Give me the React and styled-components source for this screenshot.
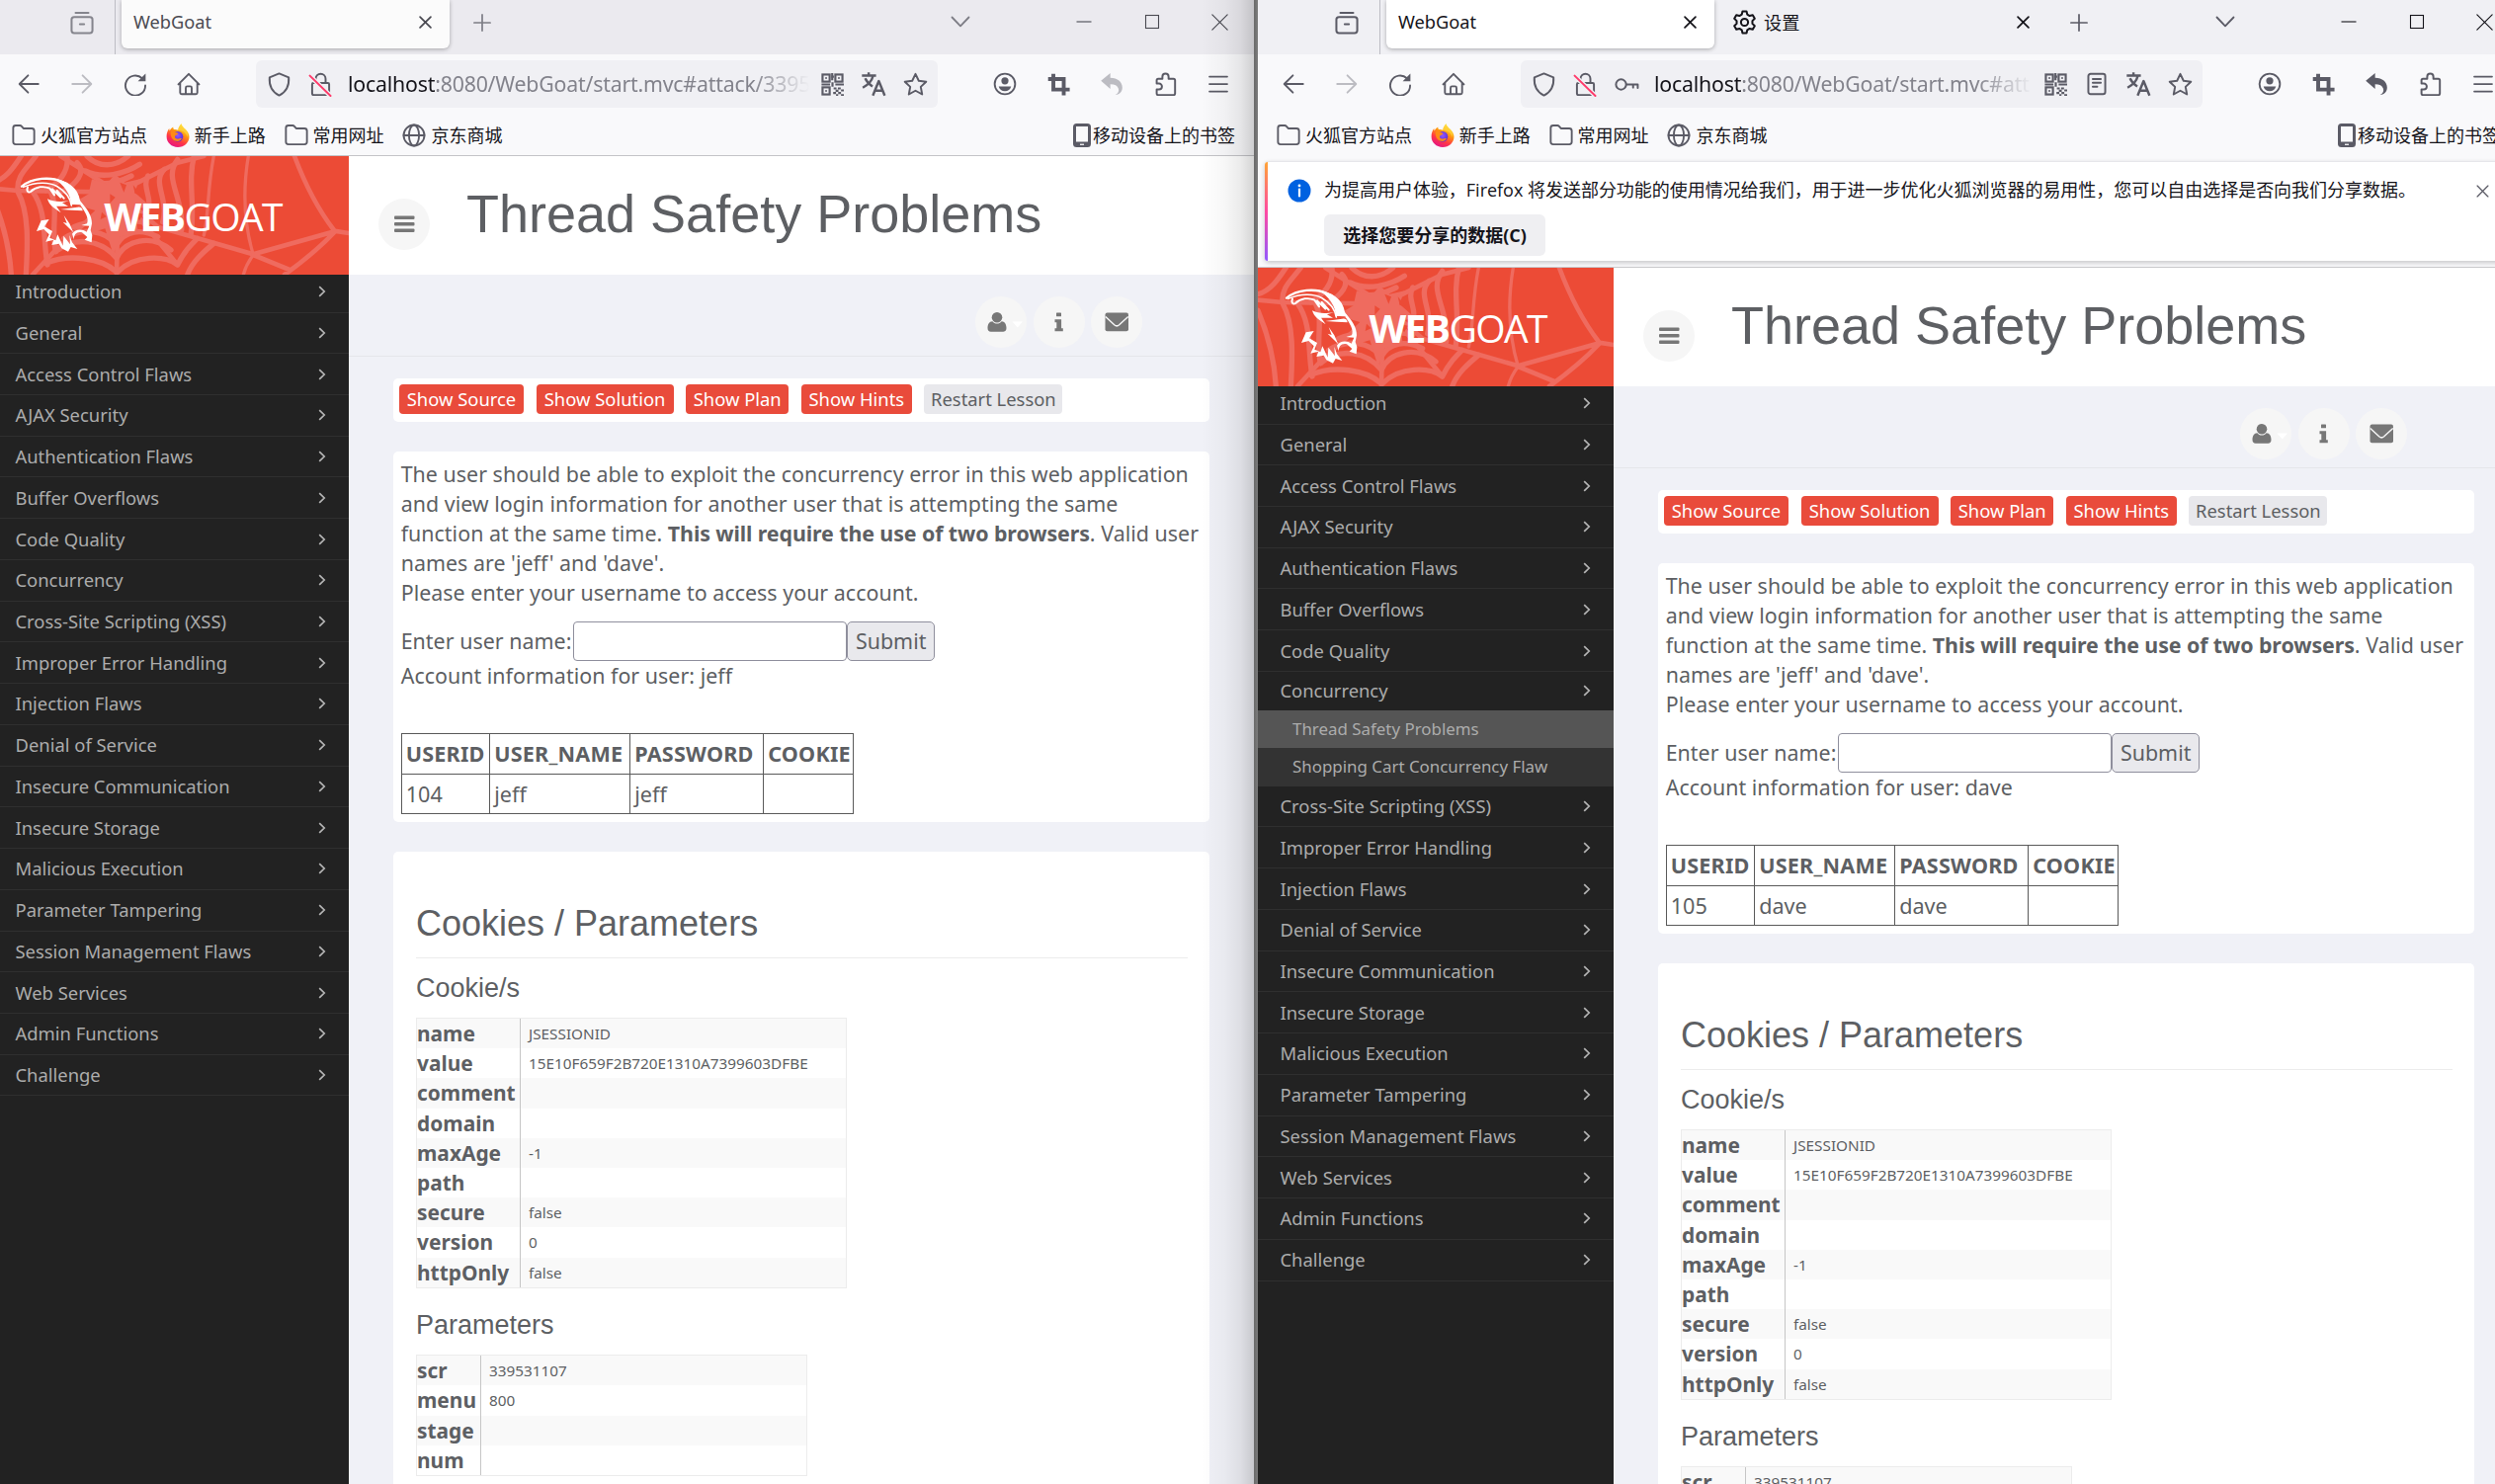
import React from "react";
import styled, { createGlobalStyle, css } from "styled-components";

const UI = `"Noto Sans", "Noto Sans CJK SC", sans-serif`;
const CJK = `"Open Sans", "Noto Sans CJK SC", sans-serif`;
const ARIAL = `"Liberation Sans", Arial, sans-serif`;

const Global = createGlobalStyle`
  * { box-sizing: border-box; }
  body { margin: 0; overflow: hidden; background: #f9f9fb; font-family: ${UI}; }
  svg { display: block; flex: none; }
`;

/* ---------- desktop ---------- */
const Desktop = styled.div`
  display: flex;
  width: 2525px;
  height: 1502px;
  overflow: hidden;
`;
const Pane = styled.div`
  position: relative;
  width: ${(p) => p.$w}px;
  height: 1502px;
  overflow: hidden;
`;
const Edge = styled.div`
  width: 4px;
  background: linear-gradient(90deg, #6a6a6a, #7c7c7c);
`;
const Shade = styled.div`
  position: absolute;
  top: 0;
  right: 0;
  width: 54px;
  height: 100%;
  background: linear-gradient(90deg, rgba(0, 0, 0, 0), rgba(0, 0, 0, 0.03) 45%, rgba(0, 0, 0, 0.08) 75%, rgba(0, 0, 0, 0.17));
`;
const Window = styled.div`
  display: flex;
  flex-direction: column;
  width: 1280px;
  height: 1502px;
  margin-left: ${(p) => p.$shift}px;
  background: #f9f9fb;
`;

/* ---------- tab strip ---------- */
const Strip = styled.div`
  display: flex;
  align-items: flex-start;
  height: 55px;
  flex: none;
  background: ${(p) => (p.$active ? "#f0f0f4" : "#ebeaef")};
  color: ${(p) => (p.$active ? "#15141a" : "#4a4a52")};
`;
const Slot = styled.div`
  display: flex;
  align-items: center;
  justify-content: center;
  flex: none;
  width: ${(p) => p.$w}px;
  height: ${(p) => p.$h || 46}px;
  margin-left: ${(p) => p.$ml || 0}px;
  margin-right: ${(p) => p.$mr || 0}px;
  color: ${(p) => p.$c || "inherit"};
`;
const StripLine = styled.div`
  width: 1px;
  height: 55px;
  background: #bdbdc4;
  margin: 0 6px 0 0;
`;
const Tab = styled.div`
  display: flex;
  align-items: center;
  width: 332px;
  height: 49px;
  margin-right: 4px;
  padding: 0 ${(p) => (p.$icon ? 17 : 18)}px 5px ${(p) => (p.$icon ? 14 : 12)}px;
  border-radius: 0 0 6px 6px;
  font-size: 18.2px;
  ${(p) =>
    p.$selected &&
    css`
      background: ${p.$active ? "#ffffff" : "#fbfbfb"};
      box-shadow: 0 1px 4px rgba(0, 0, 0, 0.3);
    `}
`;
const TabText = styled.span`
  flex: 1;
  margin-left: ${(p) => p.$ml || 0}px;
`;
const Spacer = styled.div`
  flex: 1;
`;

/* ---------- toolbar ---------- */
const Toolbar = styled.div`
  display: flex;
  align-items: center;
  flex: none;
  height: 61px;
  padding: 0 13px 1px 9px;
  color: #5b5b66;
`;
const UrlBar = styled.div`
  display: flex;
  align-items: center;
  width: 690px;
  height: 48px;
  margin-left: 41px;
  padding: 0 2px;
  border-radius: 6px;
  background: #f0f0f4;
`;
const Url = styled.div`
  flex: 1;
  margin-left: 7px;
  overflow: hidden;
  white-space: nowrap;
  font-size: 21.3px;
  letter-spacing: -0.2px;
  line-height: 36px;
  color: #83838c;
  mask-image: linear-gradient(90deg, #000 calc(100% - 60px), transparent calc(100% - 2px));
  b { font-weight: 400; color: #15141a; }
`;

/* ---------- bookmarks ---------- */
const Bookmarks = styled.div`
  display: flex;
  align-items: center;
  flex: none;
  height: ${(p) => (p.$line ? 42 : 41)}px;
  padding: 0 23px 0 19px;
  gap: 18.8px;
  border-bottom: ${(p) => (p.$line ? "1px solid #c4c4c8" : "none")};
  color: #5b5b66;
`;
const Bookmark = styled.div`
  display: flex;
  align-items: center;
  gap: ${(p) => p.$gap ?? 5}px;
  font-family: ${CJK};
  font-size: 18px;
  line-height: 26px;
  white-space: nowrap;
  span { color: #15141a; }
`;

/* ---------- notification ---------- */
const NoticeArea = styled.div`
  flex: none;
  height: 114px;
  padding: 6px 0 0 7px;
  border-bottom: 1px solid #c9c9cc;
`;
const Notice = styled.div`
  display: flex;
  height: 101px;
  border-top: 1px solid #e6e6ea;
  border-radius: 4px 0 0 4px;
  overflow: visible;
  background: #fff;
  box-shadow: 0 2px 5px rgba(0, 0, 0, 0.2);
`;
const NoticeBar = styled.div`
  width: 3px;
  border-radius: 4px 0 0 4px;
  background: linear-gradient(#ffa436, #ff4aa2 50%, #9059ff);
`;
const NoticeIcon = styled.div`
  margin: 17px 0 0 20px;
`;
const NoticeBody = styled.div`
  margin: 15px 0 0 13px;
  font-family: ${CJK};
  font-size: 18px;
  line-height: 26px;
  color: #15141a;
  white-space: nowrap;
`;
const NoticeText = styled.div`
  letter-spacing: -0.02px;
`;
const NoticeButton = styled.div`
  display: flex;
  align-items: center;
  justify-content: center;
  width: 224px;
  height: 42px;
  margin-top: 12px;
  padding-bottom: 1px;
  border-radius: 6px;
  background: #efeff2;
  font-weight: 700;
`;
const NoticeClose = styled.div`
  margin: 23px 0 0 61px;
  color: #5b5b66;
`;

/* ---------- page ---------- */
const Page = styled.div`
  display: flex;
  flex: 1;
  min-height: 0;
  overflow: hidden;
  background: #f0f1f7;
`;
const Sidebar = styled.div`
  width: 360px;
  flex: none;
  background: #222222;
`;
const Brand = styled.div`
  position: relative;
  height: 120px;
  background: #ec4b36;
  overflow: hidden;
`;
const BrandText = styled.div`
  position: absolute;
  left: 112.5px;
  top: 33.5px;
  font-family: "Open Sans", sans-serif;
  font-size: 39px;
  line-height: 54px;
  letter-spacing: -1.6px;
  color: #fff;
  white-space: nowrap;
  font-weight: 400;
  b { font-weight: 700; }
`;
const MenuItem = styled.div`
  display: flex;
  align-items: center;
  justify-content: space-between;
  height: ${(p) => p.$h}px;
  padding: 0 23px ${(p) => (p.$first ? 3 : 0)}px 22.5px;
  border-bottom: ${(p) => (p.$open ? "none" : "1px solid #2f2f2f")};
  font-size: 18.4px;
  line-height: 24px;
  color: #acacac;
  white-space: nowrap;
`;
const SubItem = styled.div`
  height: ${(p) => (p.$current ? 38 : 39)}px;
  padding-left: 35px;
  background: ${(p) => (p.$current ? "#555555" : "#333333")};
  font-size: 16.9px;
  line-height: 38px;
  color: #acacac;
  white-space: nowrap;
`;
const Main = styled.div`
  flex: 1;
  min-width: 0;
`;
const Header = styled.div`
  display: flex;
  height: 120px;
  padding-left: 30px;
  background: #fff;
`;
const Round = styled.div`
  display: flex;
  align-items: center;
  justify-content: center;
  flex: none;
  width: 52px;
  height: 52px;
  margin-top: ${(p) => p.$mt}px;
  border-radius: 50%;
  background: #f6f6f6;
  color: #777777;
`;
const Title = styled.div`
  margin: 28px 0 0 37px;
  font-family: ${ARIAL};
  font-size: 54px;
  line-height: 60px;
  color: #5d5f63;
  white-space: nowrap;
`;
const UserRow = styled.div`
  display: flex;
  justify-content: flex-end;
  gap: 6.7px;
  height: 83px;
  padding-right: 116.6px;
  border-bottom: 1px solid #e5e6ea;
`;
const Content = styled.div`
  display: flex;
  flex-direction: column;
  gap: 30px;
  padding: 22px 49px 0 45px;
  color: #5d5f63;
`;
const Card = styled.div`
  flex: none;
  height: ${(p) => p.$h}px;
  padding: ${(p) => p.$pad};
  border-radius: 5px;
  background: #fff;
`;
const ButtonCard = styled(Card)`
  display: flex;
  gap: 12.6px;
`;
const LessonButton = styled.div`
  width: ${(p) => p.$w}px;
  height: 30px;
  border-radius: 4px;
  text-align: center;
  font-size: 18.4px;
  line-height: 30px;
  white-space: nowrap;
  background: ${(p) => (p.$plain ? "#e8e8ec" : "#e94b3b")};
  color: ${(p) => (p.$plain ? "#5d5f63" : "#fff")};
`;
const Text = styled.div`
  font-size: 21.4px;
  line-height: 30px;
  letter-spacing: 0.03px;
  white-space: nowrap;
  b { letter-spacing: -0.1px; }
`;
const FormRow = styled(Text)`
  display: flex;
  height: 40px;
  margin-top: 14px;
  line-height: 40px;
`;
const Label = styled.div`
  width: 174.5px;
`;
const Field = styled.input`
  width: 277px;
  height: 40px;
  border: 1px solid #8f8f9d;
  border-radius: 4px;
  background: #fff;
`;
const Submit = styled.div`
  width: 89px;
  height: 40px;
  border: 1px solid #8f8f9d;
  border-radius: 5px;
  background: #e9e9ed;
  text-align: center;
  line-height: 38px;
`;
const UserTable = styled.table`
  width: 458px;
  margin-top: 43px;
  border-collapse: collapse;
  table-layout: fixed;
  font-size: 21.6px;
  th, td {
    height: 40.5px;
    padding: 1px 4px 0;
    border: 1px solid #5a5a5a;
    text-align: left;
    line-height: 30px;
    white-space: nowrap;
  }
  th { letter-spacing: 0.2px; }
`;
const H3 = styled.div`
  height: 55px;
  margin-right: 15px;
  border-bottom: 1px solid #ececec;
  font-family: ${ARIAL};
  font-size: 36px;
  line-height: 40px;
`;
const H4 = styled.div`
  margin: ${(p) => p.$mt}px 0 15px;
  font-family: ${ARIAL};
  font-size: 27px;
  line-height: 30px;
`;
const PairTable = styled.div`
  width: ${(p) => p.$w}px;
  border: 1px solid #ececec;
`;
const Pair = styled.div`
  display: flex;
  height: 30.2px;
  background: ${(p) => (p.$odd ? "#f9f9f9" : "#fff")};
`;
const Key = styled.div`
  width: ${(p) => p.$w}px;
  border-right: 1px solid #c6c6c6;
  font-size: 20.9px;
  line-height: 31px;
  font-weight: 700;
  white-space: nowrap;
`;
const Value = styled.div`
  padding-left: 8px;
  font-size: 15.3px;
  line-height: 30px;
`;

/* ---------- icons ---------- */
const Svg = ({ s = 24, box = 16, w = 1.2, children, ...r }) => (
  <svg width={s} height={s} viewBox={`0 0 ${box} ${box}`} fill="none" stroke="currentColor" strokeWidth={w} strokeLinecap="round" strokeLinejoin="round" {...r}>
    {children}
  </svg>
);
const ViewIcon = () => (
  <Svg s={26} w={1.25}><path d="M4 1.8h8" /><rect x="1.5" y="4.4" width="13" height="10" rx="1.6" /><path d="M6.7 8.9h2.6" /></Svg>
);
const CloseIcon = ({ s = 12, w = 1.6 }) => (
  <Svg s={s} box={12} w={w}><path d="M1 1l10 10M11 1L1 11" /></Svg>
);
const PlusIcon = () => <Svg s={18} box={18} w={1.7}><path d="M9 .9v16.2M.9 9h16.2" /></Svg>;
const DownIcon = () => <Svg s={20} box={20} w={1.8}><path d="M1.5 5.5L10 14.3l8.500-8.800" /></Svg>;
const MinIcon = () => <Svg s={16} w={1.1}><path d="M.5 8h15" strokeLinecap="butt" /></Svg>;
const MaxIcon = () => <Svg s={16} w={1.1}><rect x="1.5" y="1.5" width="13" height="13" strokeLinejoin="miter" /></Svg>;
const WinClose = () => <Svg s={17} w={1.1}><path d="M.8.8l14.400 14.400M15.200.8L.8 15.200" /></Svg>;
const BackIcon = () => <Svg w={1.25}><path d="M14.500 8H2M7.600 2.200L1.800 8l5.800 5.800" /></Svg>;
const FwdIcon = () => <Svg w={1.25}><path d="M1.500 8H14M8.400 2.200L14.200 8l-5.800 5.800" /></Svg>;
const ReloadIcon = () => (
  <Svg w={1.25}><path d="M12.600 4.200A6.700 6.700 0 1 0 14.700 9" /><path d="M14.900 1v5.200H9.700z" fill="currentColor" stroke="none" /></Svg>
);
const HomeIcon = () => (
  <Svg w={1.25}><path d="M1 8.300L8 1.200l7 7.100M2.200 7.300v6.500q0 1 1 1h9.600q1 0 1-1V7.300" /><path d="M6 14.600v-4q0-1 1-1h2q1 0 1 1v4" /></Svg>
);
const ShieldIcon = () => (
  <Svg s={25} w={1.25}><path d="M8 .9l6.200 2.500c.4 5.200-1.500 9.300-6.200 11.700C3.300 12.700 1.400 8.600 1.800 3.400z" /></Svg>
);
const LockIcon = () => (
  <Svg s={25} w={1.25}>
    <path d="M4.800 7V4.300a3.200 3.200 0 0 1 6.400 0V7M3.300 7h9.400q.8 0 .8.800v6q0 1-1 1h-9q-1 0-1-1v-6q0-.8.8-.8z" />
    <path d="M1.300 2.600l12.900 12.600" stroke="#f0f0f4" strokeWidth="3" />
    <path d="M1 2.300l13.400 13.100" stroke="#ff3b6b" />
  </Svg>
);
const KeyIcon = () => (
  <Svg s={25} w={1.25}><circle cx="4.200" cy="8" r="3.300" /><path d="M7.600 8h7.400v2.200M12 8v2" /></Svg>
);
const QrIcon = () => (
  <Svg s={23} w={1.500} strokeLinecap="butt" strokeLinejoin="miter">
    <rect x="1" y="1" width="5" height="5" /><rect x="10" y="1" width="5" height="5" /><rect x="1" y="10" width="5" height="5" />
    <path d="M3 3.500h1M12 3.500h1M3 12.500h1M7 2.500h2M7.800 0v5M.3 8h6M8 6.500v3M10 8h6M8.800 10.800h2M11.800 10.800h2M14 12.200h2M10.200 12.400h2M8.500 14h2M12 14h2M14 15.500h2M10.500 15.500h1.500" />
  </Svg>
);
const ReaderIcon = () => (
  <Svg s={24} w={1.300}><rect x="2.300" y="1.200" width="11.400" height="13.600" rx="1.500" /><path d="M5.300 4.600h5.400M5.300 7.200h5.400M5.300 9.800h3" /></Svg>
);
const TranslateIcon = () => (
  <Svg s={26} w={1.500} strokeLinecap="butt"><path d="M.8 2.800h8.800M5 .8v2M7.800 2.800C7 6 4.500 8.700 1.300 10.300M2.800 4.500c1 2.200 2.500 3.800 4.600 5" /><path d="M7.600 15.200l3.700-9 3.700 9M8.900 12.200h4.800" /></Svg>
);
const StarIcon = () => (
  <Svg s={25} w={1.250}><path d="M8 1.200l2.100 4.400 4.800.6-3.500 3.300.9 4.900L8 12l-4.300 2.400.9-4.900L1.100 6.200l4.800-.6z" /></Svg>
);
const AccountIcon = () => (
  <Svg s={24} w={1.250}><circle cx="8" cy="8" r="6.900" /><circle cx="8" cy="5.900" r="2.400" fill="currentColor" stroke="none" /><path d="M3.800 9.700h8.400c-.5 2-2.100 3.200-4.200 3.200S4.300 11.700 3.800 9.700z" fill="currentColor" stroke="none" /></Svg>
);
const CropIcon = () => (
  <Svg s={23} w={2.700} strokeLinecap="butt" strokeLinejoin="miter"><path d="M4.200.6v11h11.500M.5 4.200h11v11.500" /></Svg>
);
const UndoIcon = () => (
  <Svg s={24}><path d="M.8 5.900L7.100.6v3.200c5 .1 8.100 2.700 8.100 6.600 0 2.700-1.500 4.600-4.700 5 2-1.200 2.600-2.700 2.100-4.300-.6-2-2.500-2.900-5.500-2.900v3.200z" fill="currentColor" stroke="none" /></Svg>
);
const PuzzleIcon = () => (
  <Svg s={25} w={1.250}><path d="M6 4.300V3a2 2 0 0 1 4 0v1.300h3.200q1 0 1 1v8.500q0 1-1 1H3.300q-1 0-1-1v-2.600h1.500a1.900 1.900 0 0 0 0-3.800H2.300V5.300q0-1 1-1z" /></Svg>
);
const MenuIcon = () => <Svg s={20} w={1.400}><path d="M.8 2h14.400M.8 8h14.400M.8 14h14.400" /></Svg>;
const FolderIcon = () => (
  <Svg s={24} w={1.250}><path d="M.9 3q0-1.700 1.700-1.700h2.800q.7 0 1.200.6l1.200 1.400h5.600q1.700 0 1.700 1.700v7.400q0 1.700-1.700 1.700H2.600q-1.700 0-1.700-1.700z" /></Svg>
);
const GlobeIcon = () => (
  <Svg s={24} w={1.250}><circle cx="8" cy="8" r="7" /><ellipse cx="8" cy="8" rx="3.400" ry="7" /><path d="M1 8h14" /></Svg>
);
const PhoneIcon = () => (
  <svg width="18" height="24" viewBox="0 0 18 24"><rect width="18" height="24" rx="3.500" fill="#5b5b66" /><rect x="3" y="3" width="12" height="15.500" fill="#f9f9fb" /><rect x="7" y="20.600" width="4" height="1.300" fill="#f9f9fb" /></svg>
);
const GearIcon = () => (
  <Svg s={25} w={1.300}><circle cx="8" cy="8" r="2.300" /><path d="M6.700 1h2.600l.5 2 1.500.9 2-.6 1.300 2.300-1.500 1.500v1.800l1.500 1.500-1.300 2.300-2-.6-1.500.9-.5 2H6.700l-.5-2-1.500-.9-2 .6-1.300-2.300 1.500-1.500V7.100L1.400 5.600l1.300-2.300 2 .6L6.200 3z" /></Svg>
);
const FoxIcon = ({ id }) => (
  <svg width="24" height="24" viewBox="0 0 24 24">
    <defs>
      <linearGradient id={`${id}a`} x1=".8" y1="0" x2=".3" y2="1"><stop offset=".05" stopColor="#fff44f" /><stop offset=".4" stopColor="#ff980e" /><stop offset=".7" stopColor="#ff3647" /><stop offset="1" stopColor="#e31587" /></linearGradient>
      <radialGradient id={`${id}b`} cx=".5" cy=".4" r=".6"><stop offset="0" stopColor="#9059ff" /><stop offset="1" stopColor="#5b2bd0" /></radialGradient>
    </defs>
    <path d="M15.500.3c.4 2.600 2.400 3.800 4.300 5.700 2.300 2.200 3.700 4.600 3.700 7.500C23.500 19.300 18.400 24 12 24S.6 19.300.6 13.300c0-3.500 1-6 2.600-8.300l.5 2.400C4.600 5.500 6 4.300 7.200 3.500c0 1 .3 1.900.8 2.500 1.500-.2 3 0 4.300.7.300-2.500 1.300-4.600 3.200-6.400z" fill={`url(#${id}a)`} />
    <circle cx="12" cy="13.200" r="5.300" fill={`url(#${id}b)`} />
    <path d="M4.800 8.400c2-1 3.800-.4 5 .9 1 .1 2 .2 2.600.9-.8 1.200-2.200 1.200-3.200 2.300-.7 1.500.3 2.800 2 3.100 2 .3 3.200-1 4.700-.6-1 2.300-3.300 3.300-5.700 2.800C6.600 17 4.200 13 4.800 8.400z" fill="#ff8a16" />
    <path d="M15.500.3c.4 2.600 2.400 3.800 4.300 5.700 1.800 2 2.700 4.500 2 8-.6-2.700-2.300-4.700-4.600-6-2-.9-3.800-1-4.900-1.300.3-2.500 1.300-4.600 3.200-6.400z" fill="#ffd338" opacity=".75" />
  </svg>
);
const InfoIcon = () => (
  <svg width="24" height="24" viewBox="0 0 24 24"><circle cx="12" cy="12" r="11.500" fill="#0061e0" /><circle cx="12" cy="6.900" r="1.400" fill="#fff" /><path d="M12 10.500v7" stroke="#fff" strokeWidth="2.200" strokeLinecap="round" /></svg>
);
const BarsIcon = () => (
  <svg width="21" height="18" viewBox="0 0 21 18" fill="#777"><rect y=".5" width="20.500" height="3.400" rx="1" /><rect y="7" width="20.500" height="3.400" rx="1" /><rect y="13.500" width="20.500" height="3.400" rx="1" /></svg>
);
const UserIcon = () => (
  <svg width="50" height="22" viewBox="0 0 50 22"><circle cx="21" cy="6.200" r="5.300" fill="#777" /><path d="M16.400 10.200c1.100 1.500 2.700 2.400 4.600 2.400s3.500-.9 4.600-2.400c3.300.2 4.900 3 4.900 6.900 0 2.500-1.300 3.700-3.200 3.700H14.700c-1.900 0-3.200-1.200-3.200-3.700 0-3.900 1.600-6.700 4.900-6.900z" fill="#777" /><path d="M36.500 10.500h10.500l-5.200 6z" fill="#fff" /></svg>
);
const InfoGlyph = () => (
  <svg width="10" height="20" viewBox="0 0 10 20" fill="#777"><rect x="2" y=".5" width="5" height="3.800" rx=".6" /><path d="M.5 7.200h6.600v9h1.700v3H.5v-3h1.800v-6H.5z" /></svg>
);
const MailIcon = () => (
  <svg width="25" height="20" viewBox="0 0 25 20"><rect x=".5" y=".5" width="23.500" height="18.800" rx="2" fill="#777" /><path d="M.8 4.500l8.900 8.300c1.600 1.400 3.400 1.400 5 0l9-8.300" fill="none" stroke="#f6f6f6" strokeWidth="1.500" /></svg>
);
const Angle = () => (
  <svg width="8" height="12" viewBox="0 0 8 12" fill="none" stroke="#b4b4b4" strokeWidth="1.700"><path d="M1.200 1.200L6.200 6l-5 4.800" /></svg>
);

const BrandArt = () => (
  <svg width="360" height="120" viewBox="0 0 1080 360">
    <g fill="none" stroke="#ef6b5f" strokeWidth="16" strokeLinecap="round">
      <path d="M380 110L75 105L0 98M380 110L205 0M380 110L560 20L640 0M380 110L190 285L120 360M380 110L375 360M380 110L500 215L630 252L790 298L1040 228L1080 234M380 110L560 330M915 0C945 80 985 160 1035 225M790 300L900 345M1035 232C990 280 940 320 885 360" strokeWidth="14" />
      <path d="M670 0C650 100 655 180 640 240M775 0C760 90 760 200 790 300M790 300C775 320 765 340 760 360" strokeWidth="10" />
      <path d="M0 80C40 70 65 30 85 0M75 108C70 60 100 40 130 0M75 108C110 170 105 270 100 360M0 130C30 200 50 280 55 360M120 108C165 170 150 250 165 330M175 108C200 160 175 220 190 290" />
      <path d="M225 0C230 50 200 80 160 104M255 20C285 50 250 85 215 105M285 0C320 35 370 35 410 0M280 45C330 70 400 55 445 25M320 80C350 90 390 75 420 60" />
      <path d="M560 10C515 70 580 120 572 225M610 0C590 80 615 150 600 240M520 40C480 80 535 130 515 200M470 60C450 100 490 130 465 170" />
      <path d="M190 290C250 240 330 255 375 310C400 255 480 235 540 285M215 250C270 215 340 225 375 270C400 225 450 220 500 245M160 325C230 295 330 310 372 350M380 350C430 300 520 300 560 330M245 215C290 195 340 195 375 230C400 200 430 190 470 205M560 330C580 290 600 270 620 250M590 360C605 320 640 290 670 265" />
    </g>
    <path d="M300 70L345 85L370 55L400 80L445 70L430 110L475 150L430 165L440 230L385 245L365 300L340 220L290 235L310 165L240 145L290 115z" fill="#ef6b5f" />
    <path d="M385 80l20 8-8 22zM425 88l24 28-18-2zM355 115l16 10-16 18zM330 170l14 14-18 8zM430 170l26 6-12 20z" fill="#ec4b36" />
    <g fill="none" stroke="#fff" strokeLinecap="round" strokeLinejoin="round">
      <path d="M87 92C120 65 175 62 210 78C240 92 250 115 258 138" strokeWidth="7" />
      <path d="M92 94C130 78 170 78 195 92C225 110 235 128 238 150" strokeWidth="5" />
      <path d="M105 94C100 108 108 112 114 108C130 92 155 90 172 98L186 118L180 100L205 125L194 105L215 128" strokeWidth="6" />
    </g>
    <path d="M180 68C225 72 258 95 264 134L274 152C262 142 244 150 236 146C238 120 215 82 180 68z" fill="#fff" />
    <path d="M165 130C185 140 205 140 232 135L210 142L228 152L192 152L206 172C188 160 170 150 165 130zM205 162L250 156C262 152 272 154 272 166L240 164zM266 138C285 160 300 180 300 205L296 225L301 240L299 262L278 254L286 246L270 232C255 228 244 238 246 254L240 236C250 222 268 220 284 230L292 212L268 210L285 205C292 190 280 170 266 150z" fill="#fff" />
    <path d="M170 192L146 196L132 228L154 222L170 238L160 260L184 254L178 270L200 266L208 280L228 290L236 276L256 282L240 262L232 240L234 268L214 242L212 272L196 238L190 256L172 248L180 228L156 214zM215 180L224 204L212 200L244 232L232 205z" fill="#fff" />
  </svg>
);

/* ---------- data ---------- */
const MENU = [
  "Introduction", "General", "Access Control Flaws", "AJAX Security", "Authentication Flaws",
  "Buffer Overflows", "Code Quality", "Concurrency", "Cross-Site Scripting (XSS)",
  "Improper Error Handling", "Injection Flaws", "Denial of Service", "Insecure Communication",
  "Insecure Storage", "Malicious Execution", "Parameter Tampering", "Session Management Flaws",
  "Web Services", "Admin Functions", "Challenge",
];
const COOKIE = [
  ["name", "JSESSIONID"], ["value", "15E10F659F2B720E1310A7399603DFBE"], ["comment", ""], ["domain", ""],
  ["maxAge", "-1"], ["path", ""], ["secure", "false"], ["version", "0"], ["httpOnly", "false"],
];
const PARAMS = [["scr", "339531107"], ["menu", "800"], ["stage", ""], ["num", ""]];

const Pairs = ({ rows, w, kw }) => (
  <PairTable $w={w}>
    {rows.map(([k, v], i) => (
      <Pair key={k} $odd={i % 2 === 0}><Key $w={kw}>{k}</Key><Value>{v}</Value></Pair>
    ))}
  </PairTable>
);

const Chrome = ({ active, path }) => (
  <>
    <Strip $active={active}>
      <Slot $w={48} $ml={66} $mr={9} $c={active ? "#5b5b66" : "#85858d"}><ViewIcon /></Slot>
      <StripLine />
      <Tab $selected $active={active}><TabText>WebGoat</TabText><CloseIcon s={13} /></Tab>
      {active && (
        <Tab $icon><GearIcon /><TabText $ml={7}>设置</TabText><CloseIcon s={13} /></Tab>
      )}
      <Slot $w={57} $c={active ? "#5b5b66" : "#7d7d85"}><PlusIcon /></Slot>
      <Spacer />
      <Slot $w={57} $mr={62} $h={44} $c={active ? "#5b5b66" : "#7d7d85"}><DownIcon /></Slot>
      <Slot $w={69} $h={44}><MinIcon /></Slot>
      <Slot $w={69} $h={44}><MaxIcon /></Slot>
      <Slot $w={69} $h={44} $mr={4}><WinClose /></Slot>
    </Strip>
    <Toolbar>
      <Slot $w={54}><BackIcon /></Slot>
      <Slot $w={54} $c="#bcbcc2"><FwdIcon /></Slot>
      <Slot $w={54}><ReloadIcon /></Slot>
      <Slot $w={54}><HomeIcon /></Slot>
      <UrlBar>
        <Slot $w={42}><ShieldIcon /></Slot>
        <Slot $w={42}><LockIcon /></Slot>
        {active && <Slot $w={42}><KeyIcon /></Slot>}
        <Url><b>localhost</b>{path}</Url>
        <Slot $w={42}><QrIcon /></Slot>
        {active && <Slot $w={42}><ReaderIcon /></Slot>}
        <Slot $w={42}><TranslateIcon /></Slot>
        <Slot $w={42}><StarIcon /></Slot>
      </UrlBar>
      <Spacer />
      <Slot $w={54}><AccountIcon /></Slot>
      <Slot $w={54}><CropIcon /></Slot>
      <Slot $w={54} $c={active ? "#5b5b66" : "#bcbcc2"}><UndoIcon /></Slot>
      <Slot $w={54}><PuzzleIcon /></Slot>
      <Slot $w={54}><MenuIcon /></Slot>
    </Toolbar>
    <Bookmarks $line={!active}>
      <Bookmark><FolderIcon /><span>火狐官方站点</span></Bookmark>
      <Bookmark><FoxIcon id={active ? "r" : "l"} /><span>新手上路</span></Bookmark>
      <Bookmark><FolderIcon /><span>常用网址</span></Bookmark>
      <Bookmark><GlobeIcon /><span>京东商城</span></Bookmark>
      <Spacer />
      <Bookmark $gap={2}><PhoneIcon /><span>移动设备上的书签</span></Bookmark>
    </Bookmarks>
    {active && (
      <NoticeArea>
        <Notice>
          <NoticeBar />
          <NoticeIcon><InfoIcon /></NoticeIcon>
          <NoticeBody>
            <NoticeText>为提高用户体验，Firefox 将发送部分功能的使用情况给我们，用于进一步优化火狐浏览器的易用性，您可以自由选择是否向我们分享数据。</NoticeText>
            <NoticeButton>选择您要分享的数据(C)</NoticeButton>
          </NoticeBody>
          <NoticeClose><CloseIcon s={13} w={1.2} /></NoticeClose>
        </Notice>
      </NoticeArea>
    )}
  </>
);

const WebGoat = ({ id, user, open }) => (
  <Page>
    <Sidebar>
      <Brand><BrandArt /><BrandText><b>WEB</b>GOAT</BrandText></Brand>
      {MENU.map((m, i) => {
        const opened = open && m === "Concurrency";
        return (
          <React.Fragment key={m}>
            <MenuItem $first={i === 0} $open={opened} $h={i === 0 ? 38.5 : opened ? 38.8 : 41.74}>
              {m}<Angle />
            </MenuItem>
            {opened && (
              <>
                <SubItem $current>Thread Safety Problems</SubItem>
                <SubItem>Shopping Cart Concurrency Flaw</SubItem>
              </>
            )}
          </React.Fragment>
        );
      })}
    </Sidebar>
    <Main>
      <Header><Round $mt={43}><BarsIcon /></Round><Title>Thread Safety Problems</Title></Header>
      <UserRow>
        <Round $mt={22}><UserIcon /></Round>
        <Round $mt={22}><InfoGlyph /></Round>
        <Round $mt={22}><MailIcon /></Round>
      </UserRow>
      <Content>
        <ButtonCard $h={44} $pad="6px">
          <LessonButton $w={126}>Show Source</LessonButton>
          <LessonButton $w={139}>Show Solution</LessonButton>
          <LessonButton $w={104}>Show Plan</LessonButton>
          <LessonButton $w={112}>Show Hints</LessonButton>
          <LessonButton $w={140} $plain>Restart Lesson</LessonButton>
        </ButtonCard>
        <Card $h={375} $pad="8px 7.7px">
          <Text>
            The user should be able to exploit the concurrency error in this web application<br />
            and view login information for another user that is attempting the same<br />
            function at the same time. <b>This will require the use of two browsers</b>. Valid user<br />
            names are 'jeff' and 'dave'.<br />
            Please enter your username to access your account.
          </Text>
          <FormRow><Label>Enter user name:</Label><Field /><Submit>Submit</Submit></FormRow>
          <Text>Account information for user: {user}</Text>
          <UserTable>
            <colgroup><col style={{ width: 89.5 }} /><col style={{ width: 142 }} /><col style={{ width: 135 }} /><col style={{ width: 91 }} /></colgroup>
            <thead><tr><th>USERID</th><th>USER_NAME</th><th>PASSWORD</th><th>COOKIE</th></tr></thead>
            <tbody><tr><td>{id}</td><td>{user}</td><td>{user}</td><td /></tr></tbody>
          </UserTable>
        </Card>
        <Card $h={700} $pad="53px 7px 0 23px">
          <H3>Cookies / Parameters</H3>
          <H4 $mt={15}>Cookie/s</H4>
          <Pairs rows={COOKIE} w={436} kw={105} />
          <H4 $mt={22.5}>Parameters</H4>
          <Pairs rows={PARAMS} w={396} kw={65} />
        </Card>
      </Content>
    </Main>
  </Page>
);

export default function App() {
  return (
    <>
      <Global />
      <Desktop>
        <Pane $w={1269}>
          <Window $shift={-7}>
            <Chrome path=":8080/WebGoat/start.mvc#attack/3395" />
            <WebGoat id="104" user="jeff" />
          </Window>
          <Shade />
        </Pane>
        <Edge />
        <Pane $w={1252}>
          <Window $shift={0}>
            <Chrome active path=":8080/WebGoat/start.mvc#att" />
            <WebGoat id="105" user="dave" open />
          </Window>
        </Pane>
      </Desktop>
    </>
  );
}
